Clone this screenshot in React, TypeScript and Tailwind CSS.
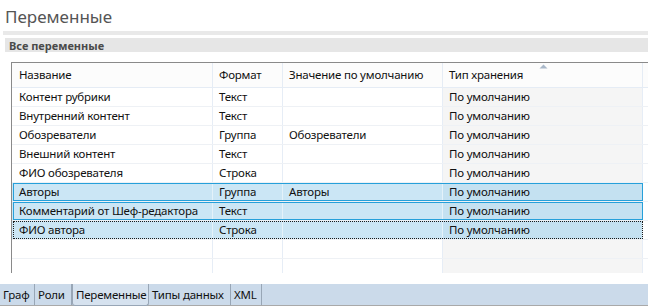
const ROWS = [
  { name: "Контент рубрики", format: "Текст", value: "", store: "По умолчанию" },
  { name: "Внутренний контент", format: "Текст", value: "", store: "По умолчанию" },
  { name: "Обозреватели", format: "Группа", value: "Обозреватели", store: "По умолчанию" },
  { name: "Внешний контент", format: "Текст", value: "", store: "По умолчанию" },
  { name: "ФИО обозревателя", format: "Строка", value: "", store: "По умолчанию" },
  { name: "Авторы", format: "Группа", value: "Авторы", store: "По умолчанию", selected: true },
  { name: "Комментарий от Шеф-редактора", format: "Текст", value: "", store: "По умолчанию", selected: true },
  { name: "ФИО автора", format: "Строка", value: "", store: "По умолчанию", selected: true, focused: true },
  { name: "", format: "", value: "", store: "" },
  { name: "", format: "", value: "", store: "" },
];

const TABS = [
  { label: "Граф", w: "w-[35px]" },
  { label: "Роли", w: "w-[37px]" },
  { label: "Переменные", w: "w-[77px]", active: true },
  { label: "Типы данных", w: "w-[82px]" },
  { label: "XML", w: "w-[31px]" },
];

function Row({ row }: { row: (typeof ROWS)[number] }) {
  const sel = row.selected;
  const sep = sel ? "border-[#e4f2fa]" : "border-[#e6edf6]";
  return (
    <div className="relative flex h-[19px] border-b border-[#eef1f5]">
      <div className={`flex w-[201px] items-center border-r pl-[7px] ${sep} ${sel ? "bg-[#cbe6f5]" : ""}`}>
        {row.name}
      </div>
      <div className={`flex w-[70px] items-center border-r pl-[6px] ${sep} ${sel ? "bg-[#cbe6f5]" : ""}`}>
        {row.format}
      </div>
      <div className={`flex w-[160px] items-center border-r pl-[6px] ${sep} ${sel ? "bg-[#cbe6f5]" : ""}`}>
        {row.value}
      </div>
      <div className={`flex w-[200px] items-center border-r pl-[6px] ${sep} ${sel ? "bg-[#c4e1f1]" : "bg-[#f5f5f5]"}`}>
        {row.store}
      </div>
      <div className="flex-1" />
      {sel && (
        <span
          className={`pointer-events-none absolute left-[1px] top-0 h-[18px] w-[630px] border ${
            row.focused ? "border-dotted border-[#1a1a1a]" : "border-[#26a0da]"
          }`}
        />
      )}
    </div>
  );
}

export default function App() {
  return (
    <div
      className="h-[307px] w-[648px] overflow-hidden bg-white text-[11.5px] tracking-[-0.2px] text-[#111]"
      style={{ fontFamily: '"Noto Sans", "Open Sans", sans-serif' }}
    >
      <div className="flex h-[31px] items-center pl-[5px] pt-[1px] text-[17px] leading-none tracking-normal text-[#555]">
        Переменные
      </div>
      <div className="ml-[3px] h-[4px] bg-[#e9e9e9]" />
      <div className="ml-[5px] mt-[3px] flex h-[14px] items-center bg-[#e6e6e6] pl-[4px] text-[11px] font-bold leading-none tracking-normal text-[#4a4a4a]">
        Все переменные
      </div>

      <div className="ml-[11px] mt-[10px] h-[211px] overflow-hidden border-l border-t border-[#8a8a8a]">
        <div className="relative flex h-[25px] border-b border-[#e5ecf5] bg-[#fcfcfc]">
          <div className="flex w-[201px] items-center border-r border-[#e5ecf5] pl-[7px]">Название</div>
          <div className="flex w-[70px] items-center border-r border-[#e5ecf5] pl-[6px]">Формат</div>
          <div className="flex w-[160px] items-center border-r border-[#e5ecf5] pl-[6px]">Значение по умолчанию</div>
          <div className="relative flex w-[200px] items-center border-r border-[#e5ecf5] pl-[6px]">
            Тип хранения
            <svg className="absolute left-[96px] top-[1px]" width="9" height="5" viewBox="0 0 9 5">
              <path d="M0.5 4.5 L4.5 0.5 L8.5 4.5 Z" fill="#a9b8c9" />
            </svg>
          </div>
          <div className="flex-1" />
        </div>
        {ROWS.map((r, i) => (
          <Row key={i} row={r} />
        ))}
      </div>

      <div className="mt-[11px] flex h-[21px] bg-[#cbdaea]">
        {TABS.map((t) => (
          <div
            key={t.label}
            className={`flex shrink-0 items-center border-r border-[#98a6b6] pl-[3px] ${t.w} ${
              t.active ? "h-[22px] rounded-b-[3px] border-b border-l bg-[#d6e2ef]" : ""
            }`}
          >
            {t.label}
          </div>
        ))}
      </div>
      <div className="h-px bg-[#a9a9a9]" />
    </div>
  );
}
